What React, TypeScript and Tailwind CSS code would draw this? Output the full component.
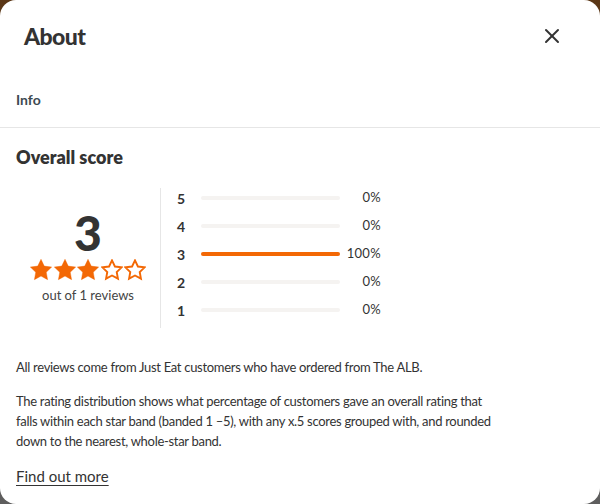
import { X } from "lucide-react";

const rows = [
  { star: 5, pct: 0 },
  { star: 4, pct: 0 },
  { star: 3, pct: 100 },
  { star: 2, pct: 0 },
  { star: 1, pct: 0 },
];

const Star = ({ filled }: { filled: boolean }) => (
  <svg viewBox="1.5 1.5 21 21" className="w-[22px] h-[22px]">
    <path
      d="M12 1.8l3.1 6.5 7.1.9-5.2 4.9 1.3 7.1L12 17.8l-6.3 3.4 1.3-7.1-5.2-4.9 7.1-.9z"
      fill={filled ? "#f36805" : "none"}
      stroke="#f36805"
      strokeWidth={filled ? 0.4 : 2}
      strokeLinejoin="miter"
      transform={filled ? undefined : "translate(12 12) scale(0.9) translate(-12 -12)"}
    />
  </svg>
);

export default function App() {
  return (
    <div className="w-[600px] h-[504px] bg-gradient-to-b from-[#5b3716] to-[#5e5e5e]">
      <div
        className="w-full h-full bg-white rounded-[16px] overflow-hidden flex flex-col text-[#333]"
        style={{ fontFamily: 'Lato, "Noto Sans", sans-serif' }}
      >
        {/* Header */}
        <div className="flex items-center justify-between pl-6 pr-[36px] h-[72px]">
          <h2 className="text-[23px] font-black text-[#333] tracking-tight">About</h2>
          <X className="w-[24px] h-[24px] text-[#333]" strokeWidth={2} />
        </div>

        {/* Tab */}
        <div className="px-4 h-[56px] flex items-center border-b border-[#e6e6e6]">
          <span className="text-[14px] font-bold text-[#3d4a52]">Info</span>
        </div>

        <div className="px-4 pt-[16px]">
          <h3 className="text-[18px] font-extrabold text-[#333]">Overall score</h3>

          <div className="flex mt-[17px]">
            {/* Score summary */}
            <div className="w-[145px] border-r border-[#e6e6e6] flex flex-col items-center justify-center h-[140px]">
              <span className="text-[48px] leading-[46px] font-black text-[#333]">3</span>
              <div className="flex gap-[1.5px] mt-[3px]">
                {[1, 2, 3, 4, 5].map((i) => (
                  <Star key={i} filled={i <= 3} />
                ))}
              </div>
              <span className="text-[13px] text-[#444] mt-[5px]">out of 1 reviews</span>
            </div>

            {/* Distribution */}
            <div className="flex flex-col pl-4 -mt-[4px]">
              {rows.map((r) => (
                <div key={r.star} className="flex items-center h-[28px]">
                  <span className="w-[24px] text-[14px] font-bold text-[#333]">{r.star}</span>
                  <div className="w-[139px] h-[4px] rounded-full bg-[#f5f3f1]">
                    <div className="h-full rounded-full bg-[#f36805]" style={{ width: `${r.pct}%` }} />
                  </div>
                  <span className="w-[41px] text-right text-[13px] text-[#333] tracking-wide">{r.pct}%</span>
                </div>
              ))}
            </div>
          </div>

          <div className="max-w-[488px] text-[13px] leading-[20px] tracking-[-0.3px]">
            <p className="mt-[29px]">
              All reviews come from Just Eat customers who have ordered from The ALB.
            </p>
            <p className="mt-[14px]">
              The rating distribution shows what percentage of customers gave an overall rating that falls within each star band (banded 1 –5), with any x.5 scores grouped with, and rounded down to the nearest, whole-star band.
            </p>
          </div>
          <a className="inline-block mt-[14px] text-[15px] underline underline-offset-[3px]">Find out more</a>
        </div>
      </div>
    </div>
  );
}
